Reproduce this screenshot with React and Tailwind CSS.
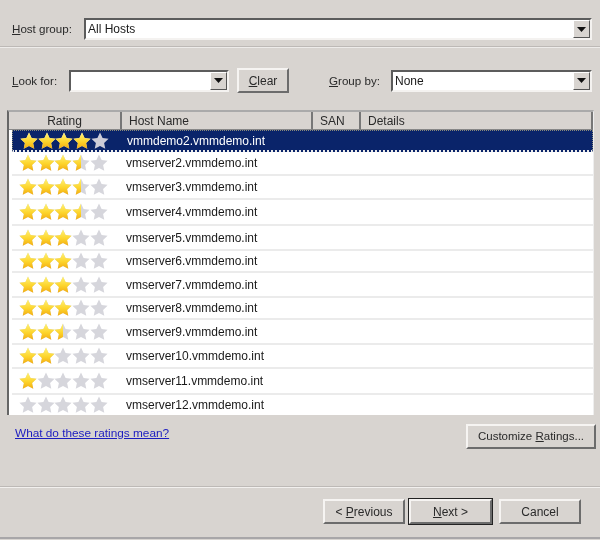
import React from 'react';

const font = "font-['Liberation_Sans',Arial,sans-serif]";

const hosts = [
  { name: 'vmmdemo2.vmmdemo.int', rating: 4, height: 'h-[22px]', selected: true },
  { name: 'vmserver2.vmmdemo.int', rating: 3.5, height: 'h-[24px]' },
  { name: 'vmserver3.vmmdemo.int', rating: 3.5, height: 'h-[24px]' },
  { name: 'vmserver4.vmmdemo.int', rating: 3.5, height: 'h-[26px]' },
  { name: 'vmserver5.vmmdemo.int', rating: 3, height: 'h-[25px]' },
  { name: 'vmserver6.vmmdemo.int', rating: 3, height: 'h-[22px]' },
  { name: 'vmserver7.vmmdemo.int', rating: 3, height: 'h-[25px]' },
  { name: 'vmserver8.vmmdemo.int', rating: 3, height: 'h-[22px]' },
  { name: 'vmserver9.vmmdemo.int', rating: 2.5, height: 'h-[25px]' },
  { name: 'vmserver10.vmmdemo.int', rating: 2, height: 'h-[24px]' },
  { name: 'vmserver11.vmmdemo.int', rating: 1, height: 'h-[26px]' },
  { name: 'vmserver12.vmmdemo.int', rating: 0, height: 'h-[20px]', last: true },
];

const STAR = 'M9 .6l2.6 5.5 6 .7-4.5 4.1 1.2 5.9L9 13.9l-5.3 2.9 1.2-5.9L.4 6.8l6-.7z';

function Star({ fill, selected }) {
  // fill: 0, 0.5 or 1
  return (
    <svg width="18" height="18" viewBox="0 0 18 18" className="shrink-0 -mr-[0.3px]">
      <path d={STAR} fill={selected ? '#ccccd8' : '#d6d6dc'} />
      {fill > 0 && (
        <g clipPath={fill < 1 ? 'url(#half)' : undefined}>
          <path d={STAR} fill="url(#gold)" />
        </g>
      )}
    </svg>
  );
}

function Stars({ rating, selected }) {
  return (
    <div className="flex w-[114px] pl-[7px] pr-[1px]">
      {[1, 2, 3, 4, 5].map((i) => (
        <Star key={i} selected={selected} fill={Math.min(1, Math.max(0, rating - i + 1))} />
      ))}
    </div>
  );
}

function Combo({ value, className }) {
  return (
    <div className={`flex items-center h-[22px] bg-white border-2 border-t-[#5c5c5c] border-l-[#5c5c5c] border-b-[#f4f2f0] border-r-[#f4f2f0] ${className}`}>
      <span className="flex-1 pl-[2px] text-[12px] text-[#1a1a1a]">{value}</span>
      <span className="flex items-center justify-center w-[17px] h-[18px] bg-[#d8d4d0] border border-t-white border-l-white border-b-[#555] border-r-[#555]">
        <svg width="9" height="5" viewBox="0 0 9 5"><path d="M0 0h9L4.5 5z" fill="#111" /></svg>
      </span>
    </div>
  );
}

function Btn({ children, className = '' }) {
  return (
    <div className={`flex items-center justify-center bg-[#d8d4d0] border-2 border-t-[#f6f4f2] border-l-[#f6f4f2] border-b-[#6c6c6c] border-r-[#6c6c6c] text-[12px] text-[#2a2a2a] ${className}`}>
      {children}
    </div>
  );
}

function HeaderCell({ children, className }) {
  return (
    <div className={`flex items-center h-[18px] bg-[#d8d4d0] border-r-2 border-r-[#777] border-b border-b-[#888] text-[12px] text-[#2a2a2a] ${className}`}>
      {children}
    </div>
  );
}

export default function App() {
  return (
    <div className={`w-[600px] h-[540px] overflow-hidden flex flex-col bg-[#d8d4d0] text-[#2a2a2a] blur-[0.4px] ${font}`}>
      <svg width="0" height="0" className="absolute">
        <defs>
          <linearGradient id="gold" x1="0" y1="0" x2="0" y2="1">
            <stop offset="0" stopColor="#fff27a" />
            <stop offset="0.55" stopColor="#fdd52c" />
            <stop offset="1" stopColor="#f2ab12" />
          </linearGradient>
          <clipPath id="half">
            <rect x="0" y="0" width="9" height="18" />
          </clipPath>
        </defs>
      </svg>

      <div className="flex items-center mt-[18px] pl-[12px] pr-[8px]">
        <span className="w-[72px] text-[11.6px]"><u>H</u>ost group:</span>
        <Combo value="All Hosts" className="flex-1" />
      </div>

      <div className="mt-[6px] h-[2px] border-t border-t-[#bdb9b6] border-b border-b-[#eeecea]" />

      <div className="flex items-center mt-[20px] pl-[12px] pr-[8px] h-[25px]">
        <span className="w-[57px] text-[11.6px]"><u>L</u>ook for:</span>
        <Combo value="" className="w-[160px]" />
        <Btn className="ml-[8px] w-[52px] h-[25px]"><span><u>C</u>lear</span></Btn>
        <span className="ml-[40px] w-[62px] text-[11.6px]"><u>G</u>roup by:</span>
        <Combo value="None" className="flex-1" />
      </div>

      <div className="mt-[17px] ml-[7px] w-[587px] h-[305px] flex flex-col bg-white border-l-2 border-l-[#666] border-t-2 border-t-[#aaa] border-r border-r-[#eee]">
        <div className="flex">
          <HeaderCell className="w-[113px] justify-center">Rating</HeaderCell>
          <HeaderCell className="w-[191px] pl-[7px]">Host Name</HeaderCell>
          <HeaderCell className="w-[48px] pl-[7px]">SAN</HeaderCell>
          <HeaderCell className="flex-1 pl-[7px]">Details</HeaderCell>
        </div>
        <div className="flex flex-col pl-[3px]">
          {hosts.map((host) => (
            <div
              key={host.name}
              className={`flex items-center ${host.height} ${host.last ? '' : 'border-b-2 border-b-[#ebebeb]'} ${host.selected ? 'bg-[#0a246a] text-white border-dotted border border-[#8a8a7a]' : 'text-[#1a1a1a]'}`}
            >
              <Stars rating={host.rating} selected={host.selected} />
              <span className="text-[12px]">{host.name}</span>
            </div>
          ))}
        </div>
      </div>

      <div className="flex items-start pl-[15px] pr-[4px] mt-[9px]">
        <a className="mt-[1px] text-[11.8px] text-[#1c1cc0] underline flex-1">What do these ratings mean?</a>
        <Btn className="w-[130px] h-[25px]"><span className="text-[11.5px]">Customize <u>R</u>atings...</span></Btn>
      </div>

      <div className="mt-[37px] h-[2px] border-t border-t-[#bdb9b6] border-b border-b-[#f2f0ee]" />

      <div className="flex justify-end mt-[11px] pr-[19px]">
        <Btn className="w-[82px] h-[25px]"><span>&lt; <u>P</u>revious</span></Btn>
        <Btn className="ml-[4px] w-[83px] h-[25px] outline outline-1 outline-[#222]"><span><u>N</u>ext &gt;</span></Btn>
        <Btn className="ml-[7px] w-[82px] h-[25px]">Cancel</Btn>
      </div>

      <div className="mt-[13px] h-[2px] bg-[#a8a6a8]" />
    </div>
  );
}
